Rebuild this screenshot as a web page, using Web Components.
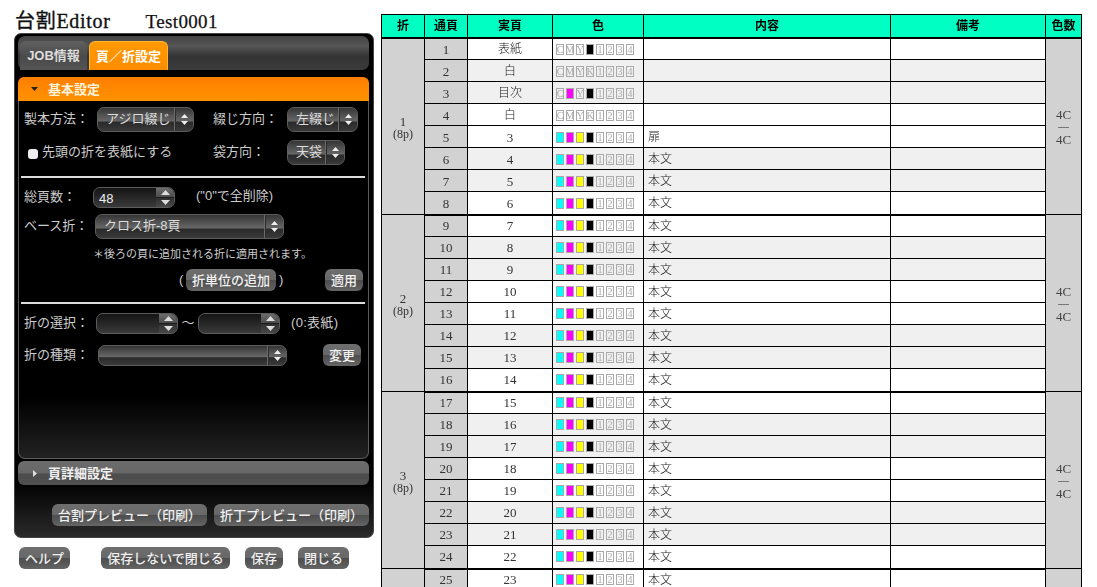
<!DOCTYPE html>
<html lang="ja"><head><meta charset="utf-8"><title>台割Editor</title>
<style>
html,body{margin:0;padding:0;height:587px;overflow:hidden;background:#fff}
body{font-family:"Noto Sans CJK JP",sans-serif}
</style></head>
<body>
<ed-app></ed-app>
<script>
const SANS='"Liberation Sans","Noto Sans CJK JP",sans-serif';
const SERIF='"Liberation Serif","Noto Sans CJK JP",serif';
function def(name,css,html,init){
  customElements.define(name,class extends HTMLElement{
    connectedCallback(){
      if(this.shadowRoot)return;
      const r=this.attachShadow({mode:'open'});
      r.innerHTML='<style>'+css+'</style>'+(typeof html==='function'?html(this):html);
      if(init)init(this,r);
    }
  });
}
def('ed-btn',`
:host{display:inline-flex;align-items:center;justify-content:center;box-sizing:border-box;height:22px;border-radius:6px;
 background:linear-gradient(#6e6e6e 0,#686868 48%,#4e4e4e 52%,#5a5a5a 80%,#666 100%);
 color:#f0f0f0;font:500 13px/1 ${SANS};white-space:nowrap}
`,`<slot></slot>`);
def('ed-select',`
:host{display:inline-flex;box-sizing:border-box;height:25px;border:1px solid #5c5c5c;border-radius:7px;overflow:hidden;
 background:linear-gradient(#343434 0,#505050 30%,#666 56%,#2a2a2a 62%,#3a3a3a 100%);color:#ddd;font:13px/1 ${SANS}}
.t{flex:1;display:flex;align-items:center;padding:0 0 3px 8px;white-space:nowrap;min-width:0}
.a{width:18px;flex:none;border-left:1px solid #6a6a6a;display:flex;align-items:center;justify-content:center;box-shadow:inset 1px 0 #2c2c2c}
svg{display:block}
`,`<div class="t"><slot></slot></div><div class="a"><svg width="7" height="11" viewBox="0 0 7 11"><path d="M3.5 0L7 4H0zM3.5 11L0 7h7z" fill="#eee"/></svg></div>`);
def('ed-spin',`
:host{display:inline-flex;box-sizing:border-box;height:21px;border:1px solid #5c5c5c;border-radius:7px;overflow:hidden;
 background:linear-gradient(#141414,#3a3a3a);color:#eee;font:13px/1 ${SANS}}
.t{flex:1;display:flex;align-items:center;padding:2px 0 0 5px;min-width:0}
.a{width:18px;flex:none;display:flex;flex-direction:column}
.a div{flex:1;display:flex;align-items:center;justify-content:center}
.u{background:linear-gradient(#6c6c6c,#4c4c4c)}
.d{background:linear-gradient(#303030,#484848);border-top:1px solid #1c1c1c}
`,`<div class="t"><slot></slot></div><div class="a"><div class="u"><svg width="9" height="5" viewBox="0 0 9 5"><path d="M4.5 0L9 5H0z" fill="#ddd"/></svg></div><div class="d"><svg width="9" height="5" viewBox="0 0 9 5"><path d="M4.5 5L0 0h9z" fill="#ddd"/></svg></div></div>`);
def('ed-tab',`
:host{display:flex;align-items:center;justify-content:center;box-sizing:border-box;height:29px;border-radius:6px 6px 0 0;
 background:linear-gradient(#606060,#4a4a4a 55%,#555);color:#ddd;font:700 13px/1 ${SANS}}
:host([on]){background:linear-gradient(#ff9a00,#ff8c00);border:1px solid #ffb62e;border-bottom:0;color:#fff}
`,`<slot></slot>`);
def('ed-head',`
:host{display:flex;align-items:center;box-sizing:border-box;height:24px;border-radius:6px;padding-left:12px;gap:8px;
 background:linear-gradient(#6c6c6c,#666 50%,#4c4c4c 54%,#505050);color:#eee;font:700 13px/1 ${SANS}}
:host([open]){border-radius:6px 6px 0 0;background:linear-gradient(#ff7e00,#ff8a00 60%,#ff9200);color:#fff3dc}
svg{display:block;width:10px;height:7px}
`,h=>h.hasAttribute('open')
 ?`<svg viewBox="0 0 10 7"><path d="M1 1h7L4.5 5z" fill="#222"/></svg><slot></slot>`
 :`<svg viewBox="0 0 10 7"><path d="M3 0l4 3.5L3 7z" fill="#ddd"/></svg><slot></slot>`);
def('ed-row',`
:host{display:flex;align-items:center;color:#ccc;font:13px/1 ${SANS};white-space:nowrap}
::slotted(span){margin-bottom:2px}
`,`<slot></slot>`);
def('ed-rule',`:host{display:block;height:2px;margin:0 2px;background:#dcdcdc}`,``);
def('ed-panel',`
:host{display:flex;flex-direction:column;box-sizing:border-box;width:360px;height:505px;padding:2px 3px 0;border:1px solid #444;border-radius:7px;
 background:linear-gradient(#000 0,#000 89%,#2a2a2a 100%)}
.bar{display:flex;align-items:flex-end;gap:2px;height:34px;padding-left:2px;box-sizing:border-box;margin-right:1px;border-radius:7px;background:linear-gradient(#444,#555 30%,#333 60%,#3c3c3c)}
ed-tab:nth-child(1){width:67px}ed-tab:nth-child(2){width:79px}
.sec{margin-top:7px;margin-right:1px;display:flex;flex-direction:column}
.body{box-sizing:border-box;height:358px;border:1px solid #5a5a5a;border-top:0;border-radius:0 0 7px 7px;padding:6px 2px 0;
 background:linear-gradient(#000 0,#000 83%,#222 100%)}
.ind{margin-left:3px}
.foot{display:flex;justify-content:flex-end;gap:7px;margin:19px 0 0;padding-right:1px}
.foot ed-btn{width:155px}
.mini{font-size:11px}
input{appearance:none;width:10px;height:10px;margin:0;border-radius:3px;background:#eee;flex:none}
`,`
<div class="bar"><ed-tab>JOB情報</ed-tab><ed-tab on>頁／折設定</ed-tab></div>
<div class="sec">
<ed-head open>基本設定</ed-head>
<div class="body">
 <ed-row class="ind"><span style="width:73px">製本方法：</span><ed-select style="width:97px">アジロ綴じ</ed-select><span style="width:74px;margin-left:19px">綴じ方向：</span><ed-select style="width:71px">左綴じ</ed-select></ed-row>
 <ed-row class="ind" style="margin-top:8px"><input type="checkbox" style="margin:3px 4px 0 4px" aria-label="先頭の折を表紙にする"><span style="width:171px;margin-bottom:3px">先頭の折を表紙にする</span><span style="width:74px">袋方向：</span><ed-select style="width:58px">天袋</ed-select></ed-row>
 <ed-rule style="margin-top:11px;margin-left:0;margin-right:1px"></ed-rule>
 <ed-row class="ind" style="margin-top:9px"><span style="width:69px">総頁数：</span><ed-spin style="width:82px">48</ed-spin><span style="margin:0 0 5px 21px">("0"で全削除)</span></ed-row>
 <ed-row class="ind" style="margin-top:6px"><span style="width:71px">ベース折：</span><ed-select style="width:189px">クロス折-8頁</ed-select></ed-row>
 <ed-row class="mini" style="margin:10px 0 0 72px;height:11px">＊後ろの頁に追加される折に適用されます。</ed-row>
 <ed-row style="margin-top:9px;margin-left:158px"><span style="width:7px">(</span><ed-btn style="width:90px">折単位の追加</ed-btn><span style="width:46px;margin-left:3px">)</span><ed-btn style="width:38px">適用</ed-btn></ed-row>
 <ed-rule style="margin-top:11px;margin-left:0;margin-right:1px"></ed-rule>
 <ed-row class="ind" style="margin-top:9px"><span style="width:72px">折の選択：</span><ed-spin style="width:82px"></ed-spin><span style="width:20px;text-align:center">〜</span><ed-spin style="width:82px"></ed-spin><span style="margin-left:11px;letter-spacing:.3px">(0:表紙)</span></ed-row>
 <ed-row class="ind" style="margin-top:10px"><span style="width:74px">折の種類：</span><ed-select style="width:189px;height:21px"></ed-select><ed-btn style="width:38px;margin-left:36px">変更</ed-btn></ed-row>
</div></div>
<ed-head style="margin-top:2px;margin-right:1px">頁詳細設定</ed-head>
<div class="foot"><ed-btn>台割プレビュー（印刷）</ed-btn><ed-btn>折丁プレビュー（印刷）</ed-btn></div>
`);
def('ed-chips',`
:host{display:flex;gap:2px;padding-left:3px;align-items:center}
i{box-sizing:border-box;width:8px;height:11px;border:1px solid #aaa;font:normal 10px/9px ${SERIF};color:#aaa;display:flex;justify-content:center}
`,h=>{
  const on=(h.getAttribute('on')||'');
  return 'CMYK1234'.split('').map(c=>{
    const col={C:'#0ff',M:'#f0f',Y:'#ff0',K:'#000'}[c];
    return on.includes(c)?`<i style="background:${col}"></i>`:`<i>${c}</i>`;
  }).join('');
});
def('ed-table',`
:host{display:block;width:700px;will-change:transform}
table{border-collapse:collapse;table-layout:fixed;width:700px;color:#333;font:13px/1 ${SERIF}}
th,td{border:1px solid #000;padding:1px 0 0;text-align:center;height:22px;box-sizing:border-box}
.later td{padding-top:0}
th{height:23px;padding:0;background:#00ffc3;color:#000;font-weight:700;font-size:12px;border-bottom:2px solid #000}
.g{background:#d2d2d2}
.a{background:#f0f0f0}
.w{background:#fff}
.l,.j{font-size:12px;font-weight:300;color:#222}
.l{text-align:left;padding-left:4px}
.end td{border-bottom:2px solid #000;height:23px}
.s{font-size:12px}
.dash{display:block;width:11px;height:1px;background:#777;margin:5px auto}
.fold{line-height:12px}
td.fold,td.cnt{padding-top:3px}
.n{line-height:1.1;color:#444}
`,()=>{
  const pg=['表紙','白','目次','白'];
  let b='';
  for(let f=0;f<4;f++){
    for(let i=0;i<8;i++){
      const p=f*8+i+1;
      if(f==3&&i>1)break;
      const real=p<=4?pg[p-1]:String(p-2);
      const bg=(p%4==2||p%4==3)?'a':'w';
      const on=p==1?'K':p==3?'MK':p<=4?'':'CMYK';
      const txt=p==5?'扉':p<=4?'':'本文';
      const fc=i==0?`<td class="g fold" rowspan="${f==3?2:8}">${f==3?'':`${f+1}<br><span class="s">(8p)</span>`}</td>`:'';
      const cc=i==0?`<td class="g cnt" rowspan="${f==3?2:8}">${f==3?'':`<span class="n">4C<span class="dash"></span>4C</span>`}</td>`:'';
      if(p==26){b+=`<tr class="later"><td class="g"></td><td class="a"></td><td class="a"></td><td class="a"></td><td class="a"></td></tr>`;break}
      b+=`<tr class="${i==7?'end':''} ${f>0?'later':''}">${fc}<td class="g">${p}</td><td class="${bg} ${p<=4?'j':''}">${real}</td><td class="${bg}"><ed-chips on="${on}"></ed-chips></td><td class="${bg} l">${txt}</td><td class="${bg}"></td>${cc}</tr>`;
    }
  }
  return `<table><colgroup><col style="width:43px"><col style="width:43px"><col style="width:85px"><col style="width:91px"><col style="width:247px"><col style="width:155px"><col style="width:36px"></colgroup>
  <thead><tr><th>折</th><th>通頁</th><th>実頁</th><th>色</th><th>内容</th><th>備考</th><th>色数</th></tr></thead><tbody>${b}</tbody></table>`;
});
def('ed-app',`
:host{display:flex;align-items:flex-start;width:1097px;height:587px;overflow:hidden;font-family:${SANS}}
.left{width:367px;margin-left:14px;flex:none}
h1{margin:0;height:33px;display:flex;align-items:flex-end;gap:35px;padding:0 0 2px 1px;font:400 20px/1 ${SERIF};color:#111;box-sizing:border-box;-webkit-text-stroke:.35px #111}
h1 b{font-weight:400;letter-spacing:.7px}
h1 span{font-size:19px;-webkit-text-stroke:.25px #111;letter-spacing:.35px}
.btm{display:flex;margin:9px 0 0 5px}
.btm ed-btn{flex:none}
.right{margin-top:14px;flex:none}
`,`
<div class="left">
 <h1><b>台割Editor</b><span>Test0001</span></h1>
 <ed-panel></ed-panel>
 <div class="btm">
  <ed-btn style="width:51px">ヘルプ</ed-btn>
  <ed-btn style="width:129px;margin-left:31px">保存しないで閉じる</ed-btn>
  <ed-btn style="width:38px;margin-left:15px">保存</ed-btn>
  <ed-btn style="width:51px;margin-left:15px">閉じる</ed-btn>
 </div>
</div>
<div class="right"><ed-table></ed-table></div>
`);
</script>
</body></html>
